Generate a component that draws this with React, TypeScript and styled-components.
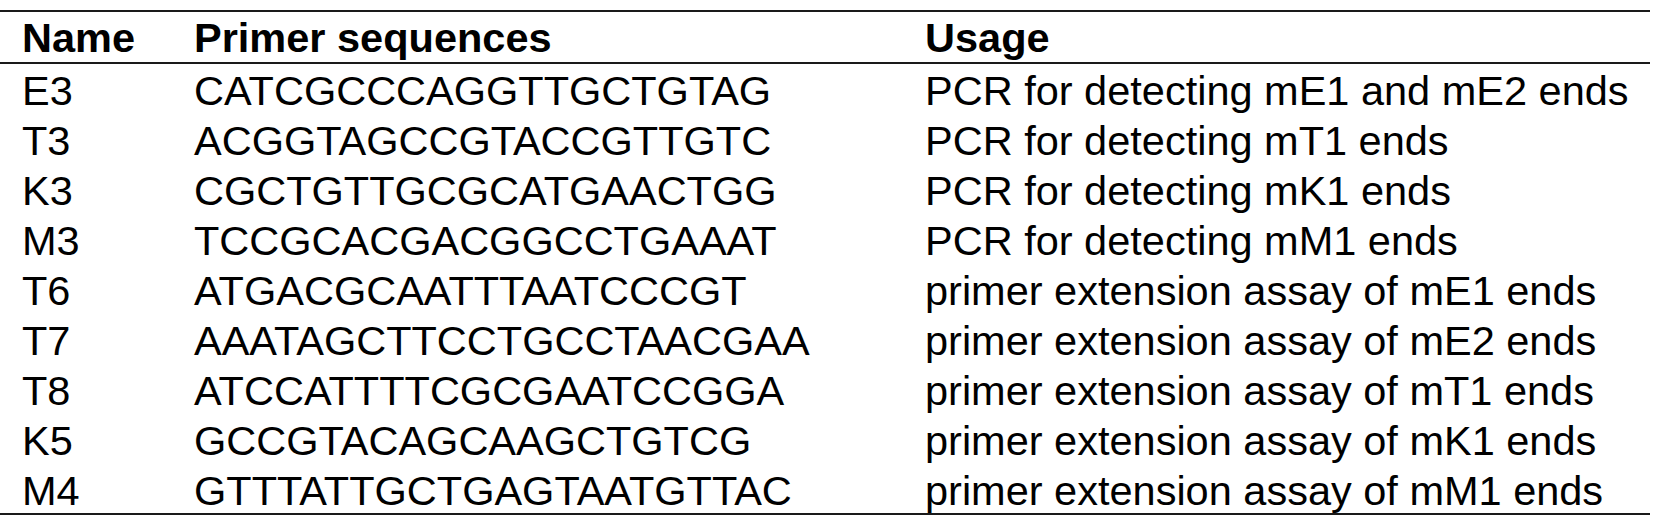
import React from "react";
import styled, { createGlobalStyle } from "styled-components";

const Global = createGlobalStyle`
  html, body { margin: 0; padding: 0; background: #fff; }
  body { font-family: "Liberation Sans", Arial, sans-serif; color: #000; }
`;

const Page = styled.div`
  padding-top: 10px;
  width: 1650px;
`;

const Table = styled.div`
  border-top: 2px solid #1a1a1a;
  border-bottom: 2px solid #1a1a1a;
`;

const Grid = styled.div<{ $head?: boolean }>`
  display: grid;
  grid-template-columns: 172px 731px 1fr;
  row-gap: 6px;
  padding: ${(p) => (p.$head ? "4px 0 2px 22px" : "5px 0 0 22px")};
  border-bottom: ${(p) => (p.$head ? "2px solid #1a1a1a" : "none")};
  font-size: 41.5px;
  line-height: 44px;
  font-weight: ${(p) => (p.$head ? 700 : 400)};
  white-space: nowrap;
`;

const Cell = styled.div``;

const rows: [string, string, string][] = [
  ["E3", "CATCGCCCAGGTTGCTGTAG", "PCR for detecting mE1 and mE2 ends"],
  ["T3", "ACGGTAGCCGTACCGTTGTC", "PCR for detecting mT1 ends"],
  ["K3", "CGCTGTTGCGCATGAACTGG", "PCR for detecting mK1 ends"],
  ["M3", "TCCGCACGACGGCCTGAAAT", "PCR for detecting mM1 ends"],
  ["T6", "ATGACGCAATTTAATCCCGT", "primer extension assay of mE1 ends"],
  ["T7", "AAATAGCTTCCTGCCTAACGAA", "primer extension assay of mE2 ends"],
  ["T8", "ATCCATTTTCGCGAATCCGGA", "primer extension assay of mT1 ends"],
  ["K5", "GCCGTACAGCAAGCTGTCG", "primer extension assay of mK1 ends"],
  ["M4", "GTTTATTGCTGAGTAATGTTAC", "primer extension assay of mM1 ends"],
];

export default function App() {
  return (
    <>
      <Global />
      <Page>
        <Table>
          <Grid $head>
            <Cell>Name</Cell>
            <Cell>Primer sequences</Cell>
            <Cell>Usage</Cell>
          </Grid>
          <Grid>
            {rows.map(([n, s, u]) => (
              <React.Fragment key={n}>
                <Cell>{n}</Cell>
                <Cell>{s}</Cell>
                <Cell>{u}</Cell>
              </React.Fragment>
            ))}
          </Grid>
        </Table>
      </Page>
    </>
  );
}
